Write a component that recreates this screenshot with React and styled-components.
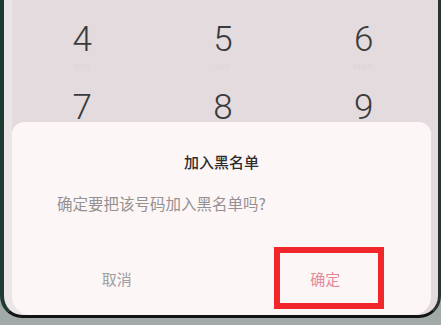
import React from "react";
import styled, { createGlobalStyle } from "styled-components";

const GlobalStyle = createGlobalStyle`
  html, body {
    margin: 0;
    padding: 0;
  }
  body {
    width: 441px;
    height: 325px;
    overflow: hidden;
    background: #a2aaa9;
    font-family: "Noto Sans CJK SC", "Noto Sans", sans-serif;
  }
`;

const Frame = styled.div`
  width: 441px;
  height: 325px;
  background: #a2aaa9;
`;

const Screen = styled.div`
  position: relative;
  height: 318px;
  box-sizing: border-box;
  border-left: 4px solid #1d3a33;
  border-right: 3px solid #2b3232;
  border-bottom: 3px solid #121414;
  border-radius: 0 0 22px 22px;
  background: #e3dbde;
  box-shadow: inset 8px 0 0 #ebe5e8;
  overflow: hidden;
`;

const Keypad = styled.div`
  display: grid;
  grid-template-columns: repeat(3, 1fr);
  row-gap: 4px;
  padding: 18px 4px 0 8px;
`;

const Key = styled.div`
  display: flex;
  flex-direction: column;
  align-items: center;
  height: 64px;
`;

const Digit = styled.span`
  font-family: "Roboto", "Liberation Sans", sans-serif;
  font-weight: 300;
  font-size: 35px;
  line-height: 44px;
  color: #3b3a3c;
`;

const Letters = styled.span`
  font-family: "Roboto", "Liberation Sans", sans-serif;
  font-size: 8px;
  letter-spacing: 1px;
  line-height: 10px;
  color: #dcd4d8;
`;

const Dialog = styled.div`
  position: absolute;
  left: 8px;
  right: 7px;
  top: 122px;
  bottom: 0;
  background: #fcf6f6;
  border-radius: 12px 12px 18px 18px;
  display: flex;
  flex-direction: column;
`;

const Title = styled.div`
  margin-top: 29px;
  text-align: center;
  font-size: 15px;
  font-weight: 500;
  line-height: 22px;
  color: #2e2c2d;
`;

const Message = styled.div`
  margin-top: 19px;
  padding-left: 45px;
  font-size: 15.5px;
  line-height: 22px;
  color: #959192;
`;

const Actions = styled.div`
  display: grid;
  grid-template-columns: 1fr 1fr;
  margin-top: auto;
  margin-bottom: 6px;
`;

const ActionCell = styled.div`
  display: flex;
  justify-content: center;
  align-items: center;
  height: 62px;
`;

const ActionButton = styled.div`
  display: flex;
  justify-content: center;
  align-items: center;
  box-sizing: border-box;
  width: 110px;
  height: 62px;
  padding-right: ${(p) => (p.$highlight ? "8px" : "0")};
  font-size: 15px;
  color: ${(p) => (p.$primary ? "#e4899a" : "#a09d9e")};
  border: ${(p) => (p.$highlight ? "6px solid #f1272c" : "none")};
  margin-left: ${(p) => (p.$highlight ? "6px" : "0")};
`;

const keys = [
  { d: "4", l: "GHI" },
  { d: "5", l: "JKL" },
  { d: "6", l: "MNO" },
  { d: "7", l: "PQRS" },
  { d: "8", l: "TUV" },
  { d: "9", l: "WXYZ" },
];

export default function App() {
  return (
    <>
      <GlobalStyle />
      <Frame>
        <Screen>
          <Keypad>
            {keys.map((k) => (
              <Key key={k.d}>
                <Digit>{k.d}</Digit>
                <Letters>{k.l}</Letters>
              </Key>
            ))}
          </Keypad>
          <Dialog>
            <Title>加入黑名单</Title>
            <Message>确定要把该号码加入黑名单吗?</Message>
            <Actions>
              <ActionCell>
                <ActionButton>取消</ActionButton>
              </ActionCell>
              <ActionCell>
                <ActionButton $primary $highlight>
                  确定
                </ActionButton>
              </ActionCell>
            </Actions>
          </Dialog>
        </Screen>
      </Frame>
    </>
  );
}
